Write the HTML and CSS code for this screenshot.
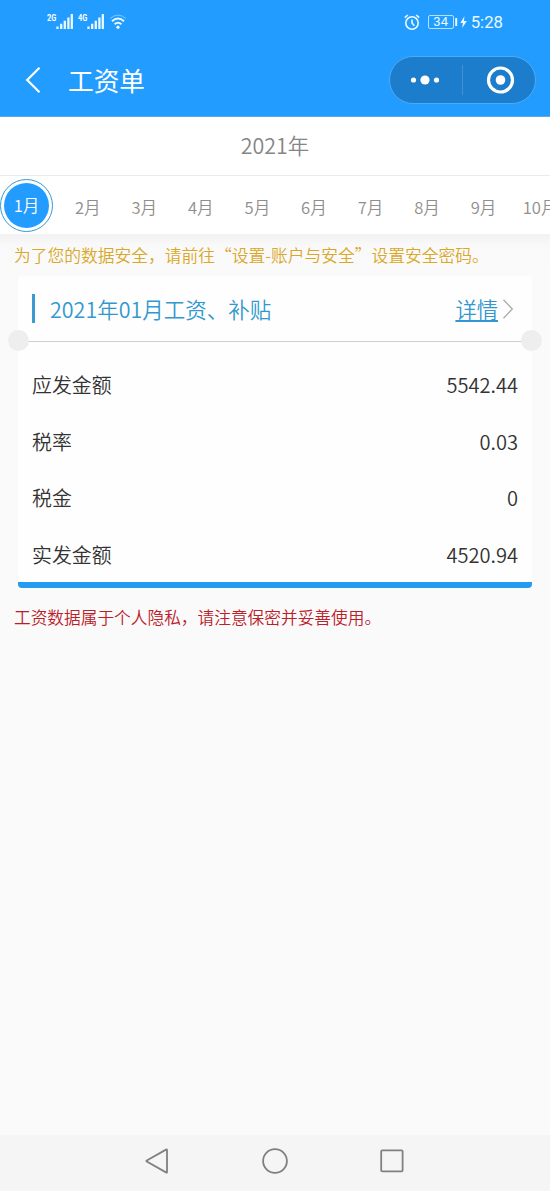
FILE: index.html
```html
<!DOCTYPE html>
<html lang="zh-CN">
<head>
<meta charset="utf-8">
<title>工资单</title>
<link rel="stylesheet" href="styles.css">
</head>
<body>
<div class="phone">
  <header class="header">
    <div class="status">
      <div class="signals">
        <span class="net">2G</span>
        <svg class="bars" width="17" height="16" viewBox="0 0 17 16"><path d="M1.5 12.5v2.5M5.2 9.8V15M8.8 6.8V15M12.4 3.5V15M15.8 0V15"/></svg>
        <span class="net net-second">4G</span>
        <svg class="bars" width="17" height="16" viewBox="0 0 17 16"><path d="M1.5 12.5v2.5M5.2 9.8V15M8.8 6.8V15M12.4 3.5V15M15.8 0V15"/></svg>
        <svg class="wifi" width="18" height="16" viewBox="0 0 18 16"><path class="faint" d="M1 4.6Q9-2.4 17 4.6"/><path d="M3 7.2Q9 1.8 15 7.2M5.6 10.2Q9 7.2 12.4 10.2"/><circle cx="9" cy="13.2" r="1.6"/></svg>
      </div>
      <div class="power">
        <svg width="16" height="17" viewBox="0 0 16 17"><circle cx="8" cy="9" r="6.2"/><path d="M8 5.5V9l2.3 2.8M.8 3.7 3.8 1M15.2 3.7 12.2 1"/></svg>
        <span class="battery">34</span>
        <svg class="bolt" width="12" height="16" viewBox="0 0 12 16"><path class="tip" d="M1.2 4v8"/><path class="flash" d="M9.4 2.2 5.3 9h2.6L7.2 14 11.8 7H9z"/></svg>
        <span class="time">5:28</span>
      </div>
    </div>
    <div class="titlebar">
      <svg class="back" width="16" height="28" viewBox="0 0 16 28"><path d="M14.5 1.8 2.2 14 14.5 26.2"/></svg>
      <h1 class="title">工资单</h1>
      <div class="capsule">
        <svg width="72" height="30" viewBox="0 0 72 30"><circle cx="23.5" cy="15" r="2.6"/><circle cx="35" cy="15" r="4.6"/><circle cx="46.5" cy="15" r="2.6"/></svg>
        <span class="divider"></span>
        <svg width="72" height="30" viewBox="0 0 72 30"><circle class="ring" cx="37.5" cy="15" r="12"/><circle cx="37.5" cy="15" r="4.8"/></svg>
      </div>
    </div>
  </header>
  <div class="year">2021年</div>
  <nav class="months">
    <span class="month active"><span class="dot">1月</span></span>
    <span class="month">2月</span>
    <span class="month">3月</span>
    <span class="month">4月</span>
    <span class="month">5月</span>
    <span class="month">6月</span>
    <span class="month">7月</span>
    <span class="month">8月</span>
    <span class="month">9月</span>
    <span class="month">10月</span>
  </nav>
  <main class="content">
    <p class="notice">为了您的数据安全，请前往“设置-账户与安全”设置安全密码。</p>
    <section class="card">
      <div class="card-head">
        <span class="mark"></span>
        <h2 class="card-title">2021年01月工资、补贴</h2>
        <a class="detail">详情</a>
        <svg class="chevron" width="12" height="22" viewBox="0 0 12 22"><path d="M1.5 1.8 10.3 11 1.5 20.2"/></svg>
      </div>
      <div class="tear"></div>
      <div class="rows">
        <div class="row"><span>应发金额</span><span class="amount">5542.44</span></div>
        <div class="row"><span>税率</span><span class="amount">0.03</span></div>
        <div class="row"><span>税金</span><span class="amount">0</span></div>
        <div class="row"><span>实发金额</span><span class="amount">4520.94</span></div>
      </div>
    </section>
    <p class="privacy">工资数据属于个人隐私，请注意保密并妥善使用。</p>
  </main>
  <footer class="navbar">
    <svg width="24" height="26" viewBox="0 0 24 26"><path d="M22 1.8V24.2Q22 25 21 24.4L1.8 13.6Q.9 13 1.8 12.4L21 1.6Q22 1 22 1.8z"/></svg>
    <svg width="26" height="26" viewBox="0 0 26 26"><circle cx="13" cy="13" r="11.9"/></svg>
    <svg width="24" height="26" viewBox="0 0 24 26"><rect x="1.2" y="2.3" width="21.4" height="21" rx="1"/></svg>
  </footer>
</div>
</body>
</html>
```

FILE: styles.css
```css
* { box-sizing: border-box; }
body {
  margin: 0;
  font-family: "Noto Sans CJK SC", "Noto Sans", sans-serif;
  font-weight: 350;
}
h1, h2, p { margin: 0; font-weight: inherit; }
svg { display: block; flex: none; fill: none; }
.phone {
  width: 550px;
  height: 1191px;
  display: flex;
  flex-direction: column;
  overflow: hidden;
  background: #fbfafb;
}
.header { flex: none; height: 117px; background: #239cff; color: #fff; border-bottom: 1px solid #5aa9e8; }
.status {
  height: 44px;
  padding: 0 47px 0 47px;
  display: flex;
  justify-content: space-between;
  align-items: center;
}
.signals { display: flex; align-items: flex-start; height: 17px; }
.signals path { stroke: #e8faff; stroke-width: 2.3; }
.net { width: 9px; font: bold 9.5px/9px "Roboto", sans-serif; transform: scaleX(.78); transform-origin: 0 0; margin-top: -1px; }
.net-second { margin-left: 5px; }
.wifi { margin-left: 5px; }
.wifi path { stroke-width: 2; }
.wifi .faint { stroke: #7ac8ff; stroke-width: 1; }
.wifi circle { fill: #fff; }
.power { display: flex; align-items: center; color: #e8faff; }
.power svg { stroke: #e8faff; stroke-width: 1.6; }
.battery {
  width: 26px;
  height: 14px;
  margin-left: 8px;
  border: 1px solid #b5e0ff;
  border-radius: 2px;
  font: 13px/12px "Roboto", sans-serif;
  text-align: center;
}
.bolt { margin-left: 1px; }
.bolt .flash { fill: #e8faff; stroke: none; }
.bolt .tip { stroke-width: 2; }
.time { margin-left: 4px; font: 16.8px/20px "Roboto", sans-serif; }
.titlebar { display: flex; align-items: center; height: 72px; padding: 0 14px 0 25px; }
.back path { stroke: #fff; stroke-width: 2.2; }
.title { flex: 1; margin-left: 27px; font-size: 25.7px; line-height: 38px; font-weight: 400; }
.capsule {
  width: 147px;
  height: 48px;
  border: 1px solid #4babf5;
  border-radius: 24px;
  background: #1d7dcd;
  display: flex;
  align-items: center;
}
.capsule circle { fill: #fff; }
.capsule .ring { fill: none; stroke: #fff; stroke-width: 3.2; }
.divider { width: 1px; height: 30px; background: #438fd0; }
.year {
  flex: none;
  height: 59px;
  background: #fff;
  border-bottom: 1px solid #ebebeb;
  color: #868686;
  font-size: 21.4px;
  line-height: 56px;
  text-align: center;
}
.months {
  flex: none;
  height: 59px;
  display: flex;
  background: #fff;
  border-bottom: 1px solid #f3f3f3;
  color: #8e8e8e;
  font-size: 16.6px;
}
.month { flex: none; width: 56.55px; line-height: 63px; text-align: center; padding-left: 5px; }
.month.active {
  display: flex;
  width: 53px;
  height: 53px;
  margin: 3px 4px 0 0;
  padding: 3px;
  border: 1.5px solid #3299d6;
  border-radius: 50%;
  color: #fff;
}
.dot { flex: 1; border-radius: 50%; background: #239cff; line-height: 44px; }
.content { flex: 1; background: linear-gradient(#f2f2f2, #faf9fa 10px, #fbfafb 40px); }
.notice { padding: 7px 14px 0; color: #d9a828; font-size: 16.75px; line-height: 26px; white-space: nowrap; }
.card {
  height: 312px;
  margin: 8px 18px 0;
  background: #fefefe;
  border-bottom: 6px solid #239cf0;
  border-radius: 4px;
}
.card-head { height: 65px; padding: 0 18px 0 14px; display: flex; align-items: center; color: #3398cf; }
.mark { width: 3px; height: 29px; background: #3a9bd0; }
.card-title { flex: 1; margin-left: 15px; font-size: 21.5px; line-height: 32px; }
.detail { font-size: 21.3px; line-height: 32px; text-decoration: underline; text-decoration-thickness: 1.5px; text-underline-offset: 2px; }
.chevron { margin-left: 4px; }
.chevron path { stroke: #aaa; stroke-width: 1.3; }
.tear { position: relative; height: 1px; background: #cfcfcf; }
.tear::before, .tear::after {
  content: "";
  position: absolute;
  top: -11px;
  width: 21px;
  height: 21px;
  border-radius: 50%;
  background: #eee;
}
.tear::before { left: -10px; }
.tear::after { right: -10px; }
.rows { padding: 15px 14px 0; color: #333; font-size: 19.9px; }
.row { height: 56.5px; display: flex; justify-content: space-between; align-items: center; line-height: 30px; }
.amount { font-size: 20.1px; }
.privacy { margin-top: 16px; padding: 0 14px; color: #ba2028; font-size: 16.7px; line-height: 26px; }
.navbar {
  flex: none;
  height: 56px;
  padding: 0 146px 4px 145px;
  display: flex;
  justify-content: space-between;
  align-items: center;
  background: #f6f5f6;
}
.navbar svg { stroke: #808080; stroke-width: 1.8; }
```
